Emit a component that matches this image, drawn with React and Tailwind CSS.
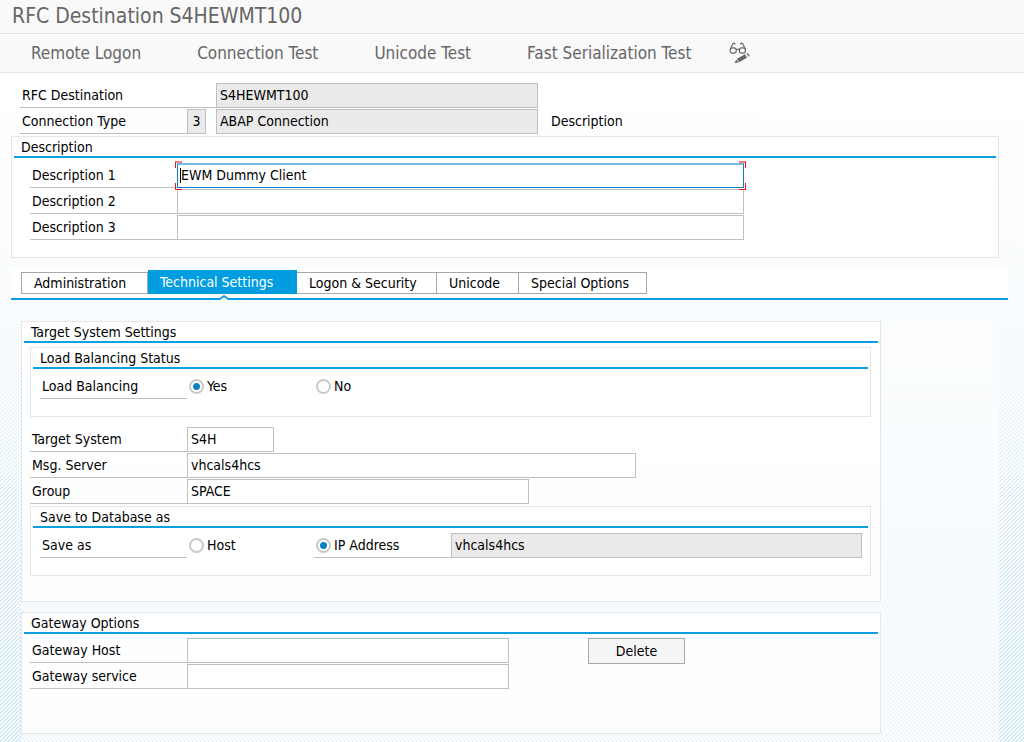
import { useState } from 'react';
import clsx from 'clsx';

const TABS = ['Administration', 'Technical Settings', 'Logon & Security', 'Unicode', 'Special Options'];

const TAB_WIDTHS = {
  'Administration': 'w-[127px]',
  'Technical Settings': 'w-[149px]',
  'Logon & Security': 'w-[140px]',
  'Unicode': 'w-[82px]',
  'Special Options': 'w-[128px]',
};

function GlassesPencilIcon() {
  return (
    <svg width="22" height="24" viewBox="0 0 22 24" fill="none" stroke="#666" strokeWidth="1.2">
      <rect x="1.2" y="5.8" width="6" height="5.4" rx="2.2" />
      <rect x="10.4" y="5.8" width="6" height="5.4" rx="2.2" />
      <path d="M7.2 7.3h3.2M1.5 6.8L4 1.6 5 1l1.4 1.2M16.2 6.8L13.6 1.6 12.600 1l-1.3 1.2" />
      <path d="M9 18.6l8-4.6" strokeWidth="4" />
      <path d="M18.2 13.4l1.6-1" strokeWidth="4" />
      <path d="M17.3 11l2.8 5" stroke="#f9f9f9" strokeWidth="0.8" />
      <path d="M5.6 21l1.6-3.6 2.4 3z" fill="#666" stroke="none" />
    </svg>
  );
}

function GroupBox({ title, className, children }) {
  return (
    <section className={clsx('border border-[#e4e6e7] bg-white/80', className)}>
      <div className="bg-white px-[2px]">
        <h2 className="h-[21px] border-b-2 border-[#0a9fe0] pl-[7px] leading-5">{title}</h2>
      </div>
      {children}
    </section>
  );
}

function FieldLabel({ htmlFor, className, children }) {
  return (
    <label
      htmlFor={htmlFor}
      className={clsx('h-[25px] shrink-0 border-b border-[#bfbfbf] pl-[2px] leading-6', className)}
    >
      {children}
    </label>
  );
}

function TextField({ className, readOnly, focused, ...props }) {
  return (
    <input
      type="text"
      readOnly={readOnly}
      className={clsx(
        'h-[25px] min-w-0 border px-[3px] text-black outline-none',
        focused ? 'border-t-2 border-[#0a84c6] border-t-[#74b9e2] pb-[3px]' : 'border-[#bfbfbf] pb-[2px]',
        readOnly ? 'bg-[#eaeaea]' : 'bg-white',
        className
      )}
      {...props}
    />
  );
}

function Radio({ label, className, ...props }) {
  return (
    <label className={clsx('flex h-[25px] items-center gap-[3px] pl-[2px]', className)}>
      <input
        type="radio"
        className="size-[15px] appearance-none rounded-full border-2 border-[#c8c8c8] bg-white checked:bg-[radial-gradient(circle,#0a7fc2_3px,#fff_4px)]"
        {...props}
      />
      {label}
    </label>
  );
}

export default function App() {
  const [activeTab, setActiveTab] = useState('Technical Settings');
  const [loadBalancing, setLoadBalancing] = useState('yes');
  const [saveAs, setSaveAs] = useState('ip');

  return (
    <div className="flex min-h-screen flex-col bg-white bg-[linear-gradient(180deg,#fff_72px,#ffffffcc_270px,#ffffff00_700px),linear-gradient(135deg,#cfe6f5_25%,#fff_25%,#fff_50%,#cfe6f5_50%,#cfe6f5_75%,#fff_75%)] bg-[size:100%_100%,4px_4px] font-['DejaVu_Sans_Condensed','DejaVu_Sans',sans-serif] text-[14px] text-black">
      <header className="h-[34px] border-b border-[#e3e3e3] bg-[#f9f9f9] pl-3">
        <h1 className="text-[21px] leading-8 text-[#666]">RFC Destination S4HEWMT100</h1>
      </header>

      {/* Toolbar */}
      <div className="flex h-[39px] items-center border-b border-[#e3e3e3] bg-[#f9f9f9] pt-[2px] pl-[31px] text-[17px] text-[#666]">
        <button type="button" className="mr-14">Remote Logon</button>
        <button type="button" className="mr-14">Connection Test</button>
        <button type="button" className="mr-14">Unicode Test</button>
        <button type="button" className="mr-[38px]">Fast Serialization Test</button>
        <button type="button" aria-label="Display / Change">
          <GlassesPencilIcon />
        </button>
      </div>

      {/* Destination header */}
      <div className="flex flex-col gap-px pt-[10px] pl-5">
        <div className="flex">
          <FieldLabel htmlFor="destination" className="w-[196px]">RFC Destination</FieldLabel>
          <TextField id="destination" className="w-[322px]" readOnly defaultValue="S4HEWMT100" />
        </div>
        <div className="flex">
          <FieldLabel htmlFor="conn-type" className="w-[167px]">Connection Type</FieldLabel>
          <TextField id="conn-type" className="mr-[10px] w-[19px] text-center" readOnly defaultValue="3" />
          <TextField aria-label="Connection type text" className="w-[322px]" readOnly defaultValue="ABAP Connection" />
          <span className="ml-[13px] leading-6">Description</span>
        </div>
      </div>

      <GroupBox title="Description" className="mt-[2px] mr-[25px] ml-[11px]">
        <div className="flex flex-col gap-px pt-[5px] pb-[17px] pl-[18px]">
          <div className="flex">
            <FieldLabel htmlFor="desc1" className="w-[147px]">Description 1</FieldLabel>
            <div className="relative flex w-[567px]">
              <TextField id="desc1" className="w-full" focused defaultValue="EWM Dummy Client" />
              <span className="absolute top-[5px] left-[3px] h-[15px] w-px bg-black" />
              <span className="absolute -top-[2px] -left-[2px] size-[7px] border-t-2 border-l border-[#e81818] border-t-[#f28080]" />
              <span className="absolute -top-[2px] -right-[2px] size-[7px] border-t-2 border-r border-[#e81818] border-t-[#f28080]" />
              <span className="absolute -bottom-[2px] -left-[2px] size-[7px] border-b border-l border-[#e81818]" />
              <span className="absolute -right-[2px] -bottom-[2px] size-[7px] border-r border-b border-[#e81818]" />
            </div>
          </div>
          <div className="flex">
            <FieldLabel htmlFor="desc2" className="w-[147px]">Description 2</FieldLabel>
            <TextField id="desc2" className="w-[567px]" />
          </div>
          <div className="flex">
            <FieldLabel htmlFor="desc3" className="w-[147px]">Description 3</FieldLabel>
            <TextField id="desc3" className="w-[567px]" />
          </div>
        </div>
      </GroupBox>

      {/* Tab strip */}
      <div className="mt-[10px] mr-4 ml-[11px] h-8 border-b-2 border-[#0a9fe0] bg-white pt-[2px] pl-[10px]">
        <div role="tablist" className="flex items-end">
          {TABS.map((tab) => {
            const active = tab === activeTab;
            return (
              <button
                key={tab}
                type="button"
                role="tab"
                aria-selected={active}
                onClick={() => setActiveTab(tab)}
                className={clsx(
                  'relative shrink-0 pl-3 text-left',
                  TAB_WIDTHS[tab],
                  active
                    ? 'h-6 bg-[#009de0] leading-[25px] text-white'
                    : 'h-[22px] border-y border-r border-[#a8a8a8] bg-white leading-5 first:border-l'
                )}
              >
                {tab}
                {active && (
                  <svg className="absolute top-[25px] left-1/2 -ml-[4px]" width="10" height="5" viewBox="0 0 10 5">
                    <path d="M1 3.8h8V5H1z" fill="#fff" />
                    <path d="M0 4.6L5 1l5 3.6" fill="#fff" stroke="#0a9fe0" strokeWidth="1.8" />
                  </svg>
                )}
              </button>
            );
          })}
        </div>
      </div>

      <div className="mt-[21px] mr-[25px] ml-[21px] flex grow flex-col gap-[10px] bg-white/55">
        <GroupBox title="Target System Settings" className="w-[860px] max-w-full">
          <div className="flex flex-col pt-[4px] pr-[9px] pb-[25px] pl-[8px]">
            <GroupBox title="Load Balancing Status">
              <div className="flex pt-[5px] pb-[17px] pl-[9px]">
                <FieldLabel className="w-[147px]">Load Balancing</FieldLabel>
                <Radio
                  label="Yes"
                  name="balancing"
                  className="w-[127px]"
                  checked={loadBalancing === 'yes'}
                  onChange={() => setLoadBalancing('yes')}
                />
                <Radio
                  label="No"
                  name="balancing"
                  checked={loadBalancing === 'no'}
                  onChange={() => setLoadBalancing('no')}
                />
              </div>
            </GroupBox>

            <div className="flex flex-col gap-px pt-[10px] pb-[2px]">
              <div className="flex">
                <FieldLabel htmlFor="target" className="w-[157px]">Target System</FieldLabel>
                <TextField id="target" className="w-[87px]" defaultValue="S4H" />
              </div>
              <div className="flex">
                <FieldLabel htmlFor="msg-server" className="w-[157px]">Msg. Server</FieldLabel>
                <TextField id="msg-server" className="w-[449px]" defaultValue="vhcals4hcs" />
              </div>
              <div className="flex">
                <FieldLabel htmlFor="group" className="w-[157px]">Group</FieldLabel>
                <TextField id="group" className="w-[342px]" defaultValue="SPACE" />
              </div>
            </div>

            <GroupBox title="Save to Database as">
              <div className="flex pt-[5px] pr-[8px] pb-[17px] pl-[9px]">
                <FieldLabel className="w-[147px]">Save as</FieldLabel>
                <Radio
                  label="Host"
                  name="save-as"
                  className="w-[127px]"
                  checked={saveAs === 'host'}
                  onChange={() => setSaveAs('host')}
                />
                <Radio
                  label="IP Address"
                  name="save-as"
                  className="w-[137px] border-b border-[#bfbfbf]"
                  checked={saveAs === 'ip'}
                  onChange={() => setSaveAs('ip')}
                />
                <TextField aria-label="Saved address" className="grow" readOnly defaultValue="vhcals4hcs" />
              </div>
            </GroupBox>
          </div>
        </GroupBox>

        <GroupBox title="Gateway Options" className="w-[860px] max-w-full">
          <div className="flex items-start px-[8px] pt-[4px] pb-[44px]">
            <div className="flex flex-col gap-px">
              <div className="flex">
                <FieldLabel htmlFor="gw-host" className="w-[157px]">Gateway Host</FieldLabel>
                <TextField id="gw-host" className="w-[322px]" />
              </div>
              <div className="flex">
                <FieldLabel htmlFor="gw-service" className="w-[157px]">Gateway service</FieldLabel>
                <TextField id="gw-service" className="w-[322px]" />
              </div>
            </div>
            <button type="button" className="ml-[79px] h-[26px] w-[97px] border border-[#a8a8a8] bg-[#f5f5f5]">
              Delete
            </button>
          </div>
        </GroupBox>
      </div>
    </div>
  );
}
